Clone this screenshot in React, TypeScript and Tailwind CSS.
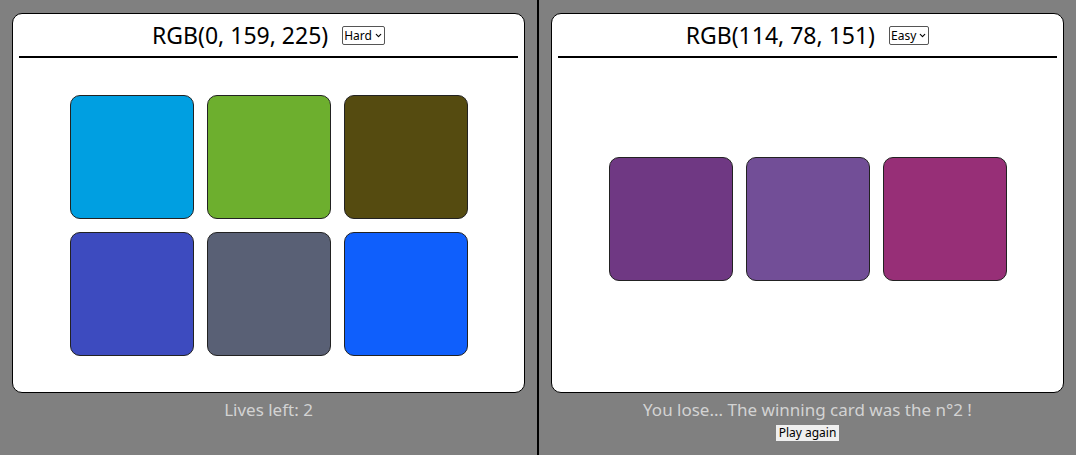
import { ChevronDown } from "lucide-react";

interface Board {
  target: string;
  mode: string;
  colors: string[];
  padTop: string;
}

const hard: Board = {
  target: "RGB(0, 159, 225)",
  mode: "Hard",
  colors: ["#009fe1", "#6daf2e", "#554b10", "#3d4bbf", "#596075", "#0f5ffc"],
  padTop: "pt-[37px]",
};

const easy: Board = {
  target: "RGB(114, 78, 151)",
  mode: "Easy",
  colors: ["#6f3883", "#724e97", "#972f77"],
  padTop: "pt-[99px]",
};

function ModeSelect({ mode }: { mode: string }) {
  return (
    <div className="flex items-center gap-[2px] h-[19px] px-[1px] border border-[#555] rounded-[2px] bg-white text-[12px] leading-none text-black">
      <span>{mode}</span>
      <ChevronDown size={9} strokeWidth={3} />
    </div>
  );
}

function GameCard({ board }: { board: Board }) {
  return (
    <div className="mx-[12px] mt-[13px] h-[380px] bg-white border border-black rounded-[10px]">
      {/* Header */}
      <div className="mx-[6px] h-[44px] border-b-2 border-black flex items-center justify-center gap-[14px] pt-[1px]">
        <h1 className="text-[23px] leading-none text-black">{board.target}</h1>
        <ModeSelect mode={board.mode} />
      </div>

      {/* Squares */}
      <div className={`flex justify-center ${board.padTop}`}>
        <div className="grid grid-cols-3 gap-[13px]">
          {board.colors.map((c, i) => (
            <div
              key={i}
              className="w-[124px] h-[124px] rounded-[10px] border border-[#222]"
              style={{ backgroundColor: c }}
            />
          ))}
        </div>
      </div>
    </div>
  );
}

export default function App() {
  return (
    <div
      className="w-[1076px] h-[455px] bg-[#808080] flex"
      style={{ fontFamily: '"Noto Sans", "Open Sans", sans-serif' }}
    >
      {/* Left game */}
      <div className="w-[537px] flex flex-col">
        <GameCard board={hard} />
        <p className="mt-[5px] text-center text-[17px] leading-6 text-[#d3d3d3]">Lives left: 2</p>
      </div>

      <div className="w-[2px] bg-black" />

      {/* Right game */}
      <div className="flex-1 flex flex-col">
        <GameCard board={easy} />
        <p className="mt-[5px] text-center text-[17px] leading-6 text-[#d3d3d3]">
          You lose... The winning card was the n°2 !
        </p>
        <div className="flex justify-center mt-[3px]">
          <button className="bg-[#efefef] px-[3px] h-[16px] text-[12px] leading-4 text-black">
            Play again
          </button>
        </div>
      </div>
    </div>
  );
}
